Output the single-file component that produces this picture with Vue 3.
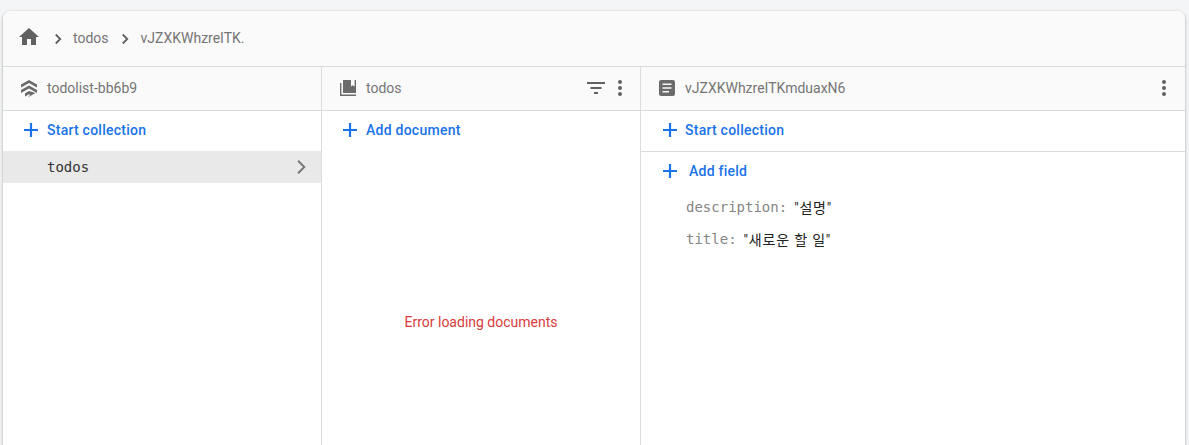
<script setup>
const fields = [
  { key: 'description', value: '"설명"' },
  { key: 'title', value: '"새로운 할 일"' },
]
</script>

<template>
  <div class="page">
    <div class="card">
      <div class="crumbs">
        <svg class="home" viewBox="0 0 24 24" width="24" height="24"><path d="M10 20v-6h4v6h5v-8h3L12 3 2 12h3v8z" fill="#616161"/></svg>
        <svg class="chev first" viewBox="0 0 24 24" width="18" height="18"><path d="M9 6l6 6-6 6" fill="none" stroke="#616161" stroke-width="2.4"/></svg>
        <span class="crumb">todos</span>
        <svg class="chev second" viewBox="0 0 24 24" width="18" height="18"><path d="M9 6l6 6-6 6" fill="none" stroke="#616161" stroke-width="2.4"/></svg>
        <span class="crumb">vJZXKWhzreITK.</span>
      </div>
      <div class="cols">
        <section class="col col1">
          <header class="head">
            <svg class="hicon" viewBox="0 0 18 18" width="18" height="18">
              <path d="M9 1L1 5.500v3L9 4l8 4.500v-3z" fill="#6b6b6b"/>
              <path d="M9 6.500L1 11v3l8-4.500 8 4.500v-3z" fill="#6b6b6b"/>
              <path d="M9 12L5 14.300V17.500l4-2.300 1.500.8-2.500 1.500h1.500l6-3.500z" fill="#6b6b6b"/>
            </svg>
            <span class="title">todolist-bb6b9</span>
          </header>
          <div class="action act1">
            <svg class="plus" viewBox="0 0 16 16" width="16" height="16"><path d="M8 1v14M1 8h14" stroke="#1a73e8" stroke-width="2.200" fill="none"/></svg>
            <span>Start collection</span>
          </div>
          <div class="item">
            <span>todos</span>
            <svg viewBox="0 0 24 24" width="20" height="20"><path d="M8.500 4.500l7.500 7.500-7.500 7.500" fill="none" stroke="#757575" stroke-width="2.200"/></svg>
          </div>
        </section>
        <section class="col col2">
          <header class="head">
            <svg class="hicon" viewBox="0 0 18 18" width="18" height="18">
              <path d="M1 4h1.400v11.600H17V17H1z" fill="#6b6b6b"/>
              <path fill-rule="evenodd" d="M4 1h13v13H4zM12 1v6.500l1.800-1.200 1.800 1.200V1z" fill="#6b6b6b"/>
            </svg>
            <span class="title">todos</span>
            <span class="spacer"></span>
            <svg class="filter" viewBox="0 0 20 14" width="20" height="14"><path d="M1 2h18M4.500 7h11M8 12h4" stroke="#616161" stroke-width="2" fill="none"/></svg>
            <svg class="dots" viewBox="0 0 4 18" width="4" height="18"><circle cx="2" cy="3" r="2" fill="#616161"/><circle cx="2" cy="9" r="2" fill="#616161"/><circle cx="2" cy="15" r="2" fill="#616161"/></svg>
          </header>
          <div class="action act1">
            <svg class="plus" viewBox="0 0 16 16" width="16" height="16"><path d="M8 1v14M1 8h14" stroke="#1a73e8" stroke-width="2.200" fill="none"/></svg>
            <span>Add document</span>
          </div>
          <div class="error">Error loading documents</div>
        </section>
        <section class="col col3">
          <header class="head">
            <svg class="hicon" viewBox="0 0 18 18" width="18" height="18">
              <path fill-rule="evenodd" d="M3 1h12A2 2 0 0 1 17 3v12a2 2 0 0 1-2 2H3A2 2 0 0 1 1 15V3A2 2 0 0 1 3 1zM4.500 4.500v1.600h9V4.500zM4.500 8.200v1.600h9V8.200zM4.500 11.900v1.600h6.500v-1.600z" fill="#6b6b6b"/>
            </svg>
            <span class="title">vJZXKWhzreITKmduaxN6</span>
            <span class="spacer"></span>
            <svg class="dots" viewBox="0 0 4 18" width="4" height="18"><circle cx="2" cy="3" r="2" fill="#616161"/><circle cx="2" cy="9" r="2" fill="#616161"/><circle cx="2" cy="15" r="2" fill="#616161"/></svg>
          </header>
          <div class="action act3 bordered">
            <svg class="plus" viewBox="0 0 16 16" width="16" height="16"><path d="M8 1v14M1 8h14" stroke="#1a73e8" stroke-width="2.200" fill="none"/></svg>
            <span>Start collection</span>
          </div>
          <div class="action act3 addf">
            <svg class="plus" viewBox="0 0 16 16" width="16" height="16"><path d="M8 1v14M1 8h14" stroke="#1a73e8" stroke-width="2.200" fill="none"/></svg>
            <span>Add field</span>
          </div>
          <div class="fields">
            <div v-for="f in fields" :key="f.key" class="field">
              <span class="key">{{ f.key }}:</span>
              <span class="val">{{ f.value }}</span>
            </div>
          </div>
        </section>
      </div>
    </div>
  </div>
</template>

<style scoped>
.page {
  width: 1189px;
  height: 445px;
  box-sizing: border-box;
  padding: 11px 3px 0 3px;
  background: #f4f5f7;
  overflow: hidden;
  font-family: Roboto, "Noto Sans CJK KR", sans-serif;
}
.card {
  height: 434px;
  width: 1182px;
  background: #fff;
  border-radius: 8px 8px 0 0;
  box-shadow: 0 1px 2px rgba(60, 64, 67, 0.3), 0 1px 3px 1px rgba(60, 64, 67, 0.15);
  overflow: hidden;
  display: flex;
  flex-direction: column;
}
.crumbs {
  height: 56px;
  flex: none;
  box-sizing: border-box;
  background: #fafafa;
  border-bottom: 1px solid #dadce0;
  display: flex;
  align-items: center;
  padding: 0 0 1px 14px;
  color: #757575;
  font-size: 14px;
}
.home { flex: none; margin-top: -2px; }
.chev { flex: none; }
.chev.first { margin: 1px 6px 0 8px; }
.chev.second { margin: 1px 7px 0 7px; }
.cols {
  flex: 1;
  display: flex;
  min-height: 0;
}
.col {
  display: flex;
  flex-direction: column;
  box-sizing: border-box;
}
.col1 { width: 319px; border-right: 1px solid #dadce0; }
.col2 { width: 319px; border-right: 1px solid #dadce0; }
.col3 { flex: 1; }
.head {
  height: 44px;
  flex: none;
  box-sizing: border-box;
  background: #fafafa;
  border-bottom: 1px solid #dadce0;
  display: flex;
  align-items: center;
  padding: 0 18px 2px 17px;
  color: #757575;
  font-size: 14px;
}
.col3 .head { padding-right: 19px; }
.hicon { flex: none; margin-right: 9px; }
.title { white-space: nowrap; }
.spacer { flex: 1; }
.filter { margin-right: 12px; }
.action {
  display: flex;
  align-items: center;
  color: #1a73e8;
  font-size: 14px;
  font-weight: 500;
  letter-spacing: 0.25px;
  flex: none;
}
.action .plus { flex: none; margin-right: 8px; }
.act1 { height: 38px; padding: 0 0 1px 20px; }
.act3 { padding-left: 21px; }
.act3 .plus { margin-right: 7px; }
.bordered { height: 38px; padding-bottom: 2px; border-bottom: 1px solid #dadce0; }
.addf { height: 38px; }
.addf .plus { margin-right: 11px; }
.item {
  height: 32px;
  flex: none;
  background: #e9e9e9;
  display: flex;
  align-items: center;
  justify-content: space-between;
  padding: 0 10px 0 44px;
  margin-top: 1px;
  font-family: "DejaVu Sans Mono", monospace;
  font-size: 14px;
  color: #333;
}
.error {
  flex: 1;
  display: flex;
  align-items: center;
  justify-content: center;
  color: #d93b3b;
  font-size: 14px;
  padding-top: 48px;
}
.fields {
  padding: 1px 0 0 45px;
}
.field {
  height: 32px;
  display: flex;
  align-items: center;
  font-size: 14px;
  white-space: nowrap;
}
.key {
  font-family: "DejaVu Sans Mono", monospace;
  color: #858585;
  margin-right: 7px;
}
.val {
  font-family: Roboto, "Noto Sans CJK KR", sans-serif;
  color: #212121;
  letter-spacing: 0.8px;
}
</style>
